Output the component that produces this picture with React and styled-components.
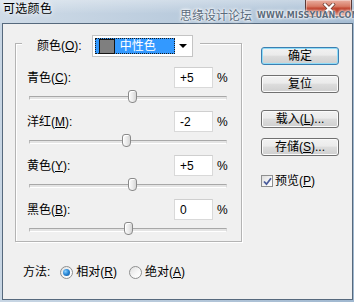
import React from "react";
import styled, { createGlobalStyle } from "styled-components";

const GlobalStyle = createGlobalStyle`
  html, body { margin: 0; padding: 0; }
  body {
    font-family: "Liberation Sans", "Noto Sans CJK SC", sans-serif;
    font-size: 12px;
    color: #000;
  }
  * { box-sizing: border-box; }
`;

const Window = styled.div`
  width: 354px;
  height: 302px;
  display: flex;
  flex-direction: column;
  background: linear-gradient(to right, #c8d6e4 0%, #b6c8da 50%, #a0b8d0 100%);
  position: relative;
  overflow: hidden;
`;

const TitleBar = styled.div`
  height: 23px;
  flex: none;
  display: flex;
  align-items: flex-start;
  padding-left: 3px;
  background: linear-gradient(to bottom, rgba(255,255,255,0.35), rgba(255,255,255,0) 60%),
    linear-gradient(to right, #cfdbe7 0%, #bccdde 45%, #a5bcd3 100%);
`;

const Title = styled.div`
  font-size: 12px;
  line-height: 14px;
  margin-top: 2px;
  letter-spacing: 0.3px;
  text-shadow: 0 0 4px rgba(255,255,255,0.9), 0 0 8px rgba(255,255,255,0.7);
`;

const CloseButton = styled.div`
  margin-left: auto;
  margin-right: 2px;
  width: 47px;
  height: 17px;
  border: 1px solid #5a3a36;
  border-top: none;
  border-radius: 0 0 4px 4px;
  background: linear-gradient(to bottom, #eab0a2 0%, #d77a64 40%, #c0412a 52%, #b8321c 75%, #d66a4e 100%);
  box-shadow: inset 0 0 0 1px rgba(255,255,255,0.35);
  display: flex;
  align-items: center;
  justify-content: center;
`;

const Watermark = styled.div`
  position: absolute;
  left: 180px;
  top: 8px;
  width: 172px;
  display: flex;
  align-items: center;
  gap: 5px;
  white-space: nowrap;
  color: #5b6b7c;
  text-shadow: 0 0 2px #fff, 0 0 3px #fff, 0 0 4px #fff;
  pointer-events: none;
`;

const WatermarkCn = styled.span`
  flex: none;
  font-family: "Noto Sans CJK SC", sans-serif;
  font-size: 12px;
  line-height: 14px;
`;

const WatermarkEn = styled.span`
  flex: none;
  font-family: "DejaVu Sans", sans-serif;
  font-size: 8px;
  font-weight: bold;
  line-height: 10px;
  margin-top: 2px;
  letter-spacing: 0.2px;
`;

const Client = styled.div`
  flex: 1;
  margin: 0 1px 2px 2px;
  border: 1px solid #56697d;
  background: #f0f0f0;
  display: flex;
  align-items: flex-start;
`;

const LeftColumn = styled.div`
  padding: 19px 0 0 12px;
  display: flex;
  flex-direction: column;
`;

const GroupBox = styled.div`
  width: 227px;
  border: 1px solid #b4b4b4;
  box-shadow: inset 1px 1px 0 #fff, 1px 1px 0 #fff;
  padding-bottom: 6px;
  display: flex;
  flex-direction: column;
`;

const GroupHeader = styled.div`
  margin-top: -9px;
  margin-left: 6px;
  align-self: flex-start;
  display: flex;
  align-items: center;
  gap: 10px;
  height: 22px;
  background: #f0f0f0;
  padding: 0 7px 0 15px;
`;

const Label = styled.span`
  font-size: 12px;
  line-height: 14px;
  white-space: nowrap;
  width: ${(p) => (p.$width ? `${p.$width}px` : "auto")};
  flex: none;
`;

const Dropdown = styled.div`
  width: 101px;
  height: 22px;
  border: 1px solid #c4c4c4;
  background: #fff;
  padding: 2px;
  display: flex;
`;

const DropdownSelected = styled.div`
  width: 80px;
  background: #3399ff;
  border: 1px dotted #1a1a1a;
  display: flex;
  align-items: center;
  padding-left: 3px;
`;

const Swatch = styled.div`
  width: 16px;
  height: 15px;
  background: #7f7f7f;
  border: 1px solid #151515;
  flex: none;
`;

const DropdownText = styled.span`
  color: #fff;
  margin-left: 5px;
  font-size: 12px;
  line-height: 14px;
`;

const DropdownArrow = styled.div`
  flex: 1;
  display: flex;
  align-items: center;
  justify-content: center;
  &::after {
    content: "";
    display: block;
    margin-left: 2px;
    border-left: 4px solid transparent;
    border-right: 4px solid transparent;
    border-top: 4px solid #000;
  }
`;

const Rows = styled.div`
  padding-top: 10px;
  display: flex;
  flex-direction: column;
  gap: 8px;
`;

const Row = styled.div`
  display: flex;
  flex-direction: column;
`;

const RowTop = styled.div`
  display: flex;
  align-items: center;
  height: 21px;
  padding-left: 11px;
`;

const ValueBox = styled.div`
  width: 39px;
  height: 21px;
  border: 1px solid #d9d9d9;
  border-top-color: #cfcfcf;
  background: #fff;
  padding-left: 5px;
  display: flex;
  align-items: center;
  font-size: 12px;
  line-height: 14px;
`;

const Percent = styled.span`
  margin-left: 4px;
  font-size: 12px;
  line-height: 14px;
`;

const Slider = styled.div`
  position: relative;
  margin: 2px 0 0 13px;
  width: 198px;
  height: 13px;
  display: flex;
  align-items: center;
`;

const Track = styled.div`
  width: 100%;
  height: 4px;
  margin-top: 2px;
  border-top: 1px solid #a8a8a8;
  border-bottom: 1px solid #ffffff;
  border-left: 1px solid #b8b8b8;
  border-right: 1px solid #d8d8d8;
  background: #e4e4e4;
`;

const Thumb = styled.div`
  position: absolute;
  top: 0;
  width: 9px;
  height: 13px;
  border: 1px solid #8a8a8a;
  border-radius: 3px 3px 4px 4px;
  background: linear-gradient(to right, #fbfbfb 0%, #ececec 50%, #d6d6d6 100%);
  box-shadow: inset 1px 1px 0 #fff;
`;

const MethodRow = styled.div`
  margin: 23px 0 0 8px;
  display: flex;
  align-items: center;
  height: 14px;
`;

const RadioOption = styled.div`
  display: flex;
  align-items: center;
  gap: 3px;
  margin-left: ${(p) => p.$offset}px;
`;

const Radio = styled.div`
  width: 13px;
  height: 13px;
  border-radius: 50%;
  border: 1px solid #8e8f8f;
  background: linear-gradient(135deg, #e0e0e0 0%, #f8f8f8 60%, #ffffff 100%);
  display: flex;
  align-items: center;
  justify-content: center;
  &::after {
    content: "";
    display: ${(p) => (p.$checked ? "block" : "none")};
    width: 7px;
    height: 7px;
    border-radius: 50%;
    background: radial-gradient(circle at 35% 35%, #8ad0ff 0%, #2c8ad8 45%, #0f4f93 100%);
  }
`;

const RightColumn = styled.div`
  margin-left: 19px;
  padding-top: 23px;
  width: 78px;
  display: flex;
  flex-direction: column;
`;

const Button = styled.div`
  height: 18px;
  margin-top: ${(p) => p.$gap || 0}px;
  border: 1px solid ${(p) => (p.$primary ? "#3c7fb1" : "#707070")};
  border-radius: 3px;
  background: linear-gradient(to bottom, #f2f2f2 0%, #ebebeb 45%, #dddddd 50%, #cfcfcf 100%);
  box-shadow: inset 0 0 0 1px ${(p) => (p.$primary ? "#8fdcf8" : "#fbfbfb")};
  display: flex;
  align-items: center;
  justify-content: center;
  font-size: 12px;
  line-height: 14px;
  white-space: nowrap;
`;

const CheckRow = styled.div`
  margin-top: 18px;
  display: flex;
  align-items: center;
  gap: 2px;
`;

const CheckBox = styled.div`
  width: 12px;
  height: 12px;
  border: 1px solid #8e8f8f;
  background: linear-gradient(135deg, #dcdcdc 0%, #f6f6f6 60%, #fff 100%);
  display: flex;
  align-items: center;
  justify-content: center;
`;

const rows = [
  { name: "青色", key: "C", value: 5 },
  { name: "洋红", key: "M", value: -2 },
  { name: "黄色", key: "Y", value: 5 },
  { name: "黑色", key: "B", value: 0 },
];

const fmt = (v) => (v > 0 ? `+${v}` : `${v}`);

export default function App() {
  return (
    <>
      <GlobalStyle />
      <Window>
        <TitleBar>
          <Title>可选颜色</Title>
          <CloseButton>
            <svg width="14" height="11" viewBox="0 0 14 11">
              <path d="M3 1.5 L11 9.5 M11 1.5 L3 9.5" stroke="#5a2a20" strokeWidth="3.6" strokeLinecap="square" />
              <path d="M3 1.5 L11 9.5 M11 1.5 L3 9.5" stroke="#ffffff" strokeWidth="2.4" strokeLinecap="square" />
            </svg>
          </CloseButton>
        </TitleBar>
        <Watermark>
          <WatermarkCn>思缘设计论坛</WatermarkCn>
          <WatermarkEn>WWW.MISSYUAN.COM</WatermarkEn>
        </Watermark>
        <Client>
          <LeftColumn>
            <GroupBox>
              <GroupHeader>
                <Label>
                  颜色(<u>O</u>):
                </Label>
                <Dropdown>
                  <DropdownSelected>
                    <Swatch />
                    <DropdownText>中性色</DropdownText>
                  </DropdownSelected>
                  <DropdownArrow />
                </Dropdown>
              </GroupHeader>
              <Rows>
                {rows.map((r) => (
                  <Row key={r.key}>
                    <RowTop>
                      <Label $width={147}>
                        {r.name}(<u>{r.key}</u>):
                      </Label>
                      <ValueBox>{fmt(r.value)}</ValueBox>
                      <Percent>%</Percent>
                    </RowTop>
                    <Slider>
                      <Track />
                      <Thumb style={{ left: `${99 + r.value * 0.99 - 4.5}px` }} />
                    </Slider>
                  </Row>
                ))}
              </Rows>
            </GroupBox>
            <MethodRow>
              <Label>方法:</Label>
              <RadioOption $offset={10}>
                <Radio $checked />
                <Label>
                  相对(<u>R</u>)
                </Label>
              </RadioOption>
              <RadioOption $offset={12}>
                <Radio />
                <Label>
                  绝对(<u>A</u>)
                </Label>
              </RadioOption>
            </MethodRow>
          </LeftColumn>
          <RightColumn>
            <Button $primary>确定</Button>
            <Button $gap={10}>复位</Button>
            <Button $gap={17}>
              载入(<u>L</u>)...
            </Button>
            <Button $gap={10}>
              存储(<u>S</u>)...
            </Button>
            <CheckRow>
              <CheckBox>
                <svg width="9" height="9" viewBox="0 0 9 9">
                  <path d="M1 4.5 L3.5 7.2 L8 1.2" fill="none" stroke="#4a5c9c" strokeWidth="1.8" />
                </svg>
              </CheckBox>
              <Label>
                预览(<u>P</u>)
              </Label>
            </CheckRow>
          </RightColumn>
        </Client>
      </Window>
    </>
  );
}
